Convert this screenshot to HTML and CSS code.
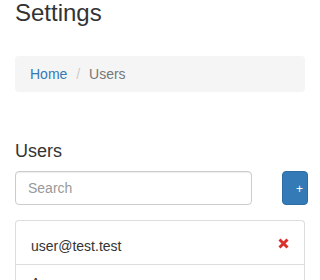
FILE: index.html
```html
<!DOCTYPE html>
<html lang="en">
<head>
  <meta charset="UTF-8" />
  <meta name="viewport" content="width=device-width, initial-scale=1.0"/>
  <title>Settings - Users</title>
  <link rel="stylesheet" href="styles.css">
</head>
<body>
  <h1>Settings</h1>

  <ol class="breadcrumb">
    <li><a href="#">Home</a></li>
    <li class="active">Users</li>
  </ol>

  <h3 class="section-title">Users</h3>

  <div class="toolbar">
    <input type="text" class="search" placeholder="Search" />
    <button class="add-btn">+</button>
  </div>

  <div class="user-list">
    <div class="user-item first">
      <span>user@test.test</span>
      <svg class="remove" width="11" height="11" viewBox="0 0 11 11">
        <path d="M1.5 1.5 L9.5 9.5 M9.5 1.5 L1.5 9.5" stroke="#d9302c" stroke-width="3" fill="none"/>
      </svg>
    </div>
    <div class="user-item second">
      <span>Anonymous</span>
    </div>
  </div>
</body>
</html>
```

FILE: styles.css
```css
body {
  margin: 0;
  padding: 0 15px;
  font-family: 'Liberation Sans', Arial, sans-serif;
  font-size: 14px;
  line-height: 20px;
  color: #333;
  background: #fff;
}
h1 {
  font-size: 24px;
  font-weight: 400;
  line-height: 1.1;
  margin: 0 0 30px 0;
}
.breadcrumb {
  list-style: none;
  margin: 0;
  padding: 8px 15px;
  background: #f5f5f5;
  border-radius: 4px;
  height: 20px;
}
.breadcrumb li {
  display: inline-block;
}
.breadcrumb li + li:before {
  content: "/\00a0";
  padding: 0 5px;
  color: #ccc;
}
.breadcrumb a {
  color: #337ab7;
  text-decoration: none;
}
.breadcrumb .active {
  color: #777;
}
.section-title {
  font-size: 18px;
  font-weight: 400;
  line-height: 1.1;
  margin: 50px 0 9px 0;
}
.toolbar {
  display: flex;
  align-items: flex-start;
  margin-bottom: 15px;
}
.search {
  flex: none;
  width: 237px;
  height: 34px;
  box-sizing: border-box;
  padding: 6px 12px;
  font-family: inherit;
  font-size: 14px;
  line-height: 20px;
  color: #555;
  border: 1px solid #ccc;
  border-radius: 4px;
  box-shadow: inset 0 1px 1px rgba(0,0,0,.075);
  outline: none;
}
.search::placeholder {
  color: #999;
}
.add-btn {
  flex: none;
  width: 26px;
  height: 34px;
  margin-left: 30px;
  padding: 0 0 0 13px;
  text-align: left;
  background: #337ab7;
  border: 1px solid #2e6da4;
  border-radius: 4px;
  color: #fff;
  font-family: inherit;
  font-size: 12px;
  line-height: 34px;
}
.user-list {
  border: 1px solid #ddd;
  border-bottom: none;
  border-radius: 4px 4px 0 0;
}
.user-item {
  display: flex;
  justify-content: space-between;
  align-items: flex-start;
  padding: 0 15px;
}
.user-item.first {
  padding-top: 15px;
  box-sizing: border-box;
  border-bottom: 1px solid #ddd;
  height: 44px;
}
.user-item.first .remove {
  margin-top: 2px;
}
.user-item.second {
  padding-top: 8px;
  height: 40px;
}
```
